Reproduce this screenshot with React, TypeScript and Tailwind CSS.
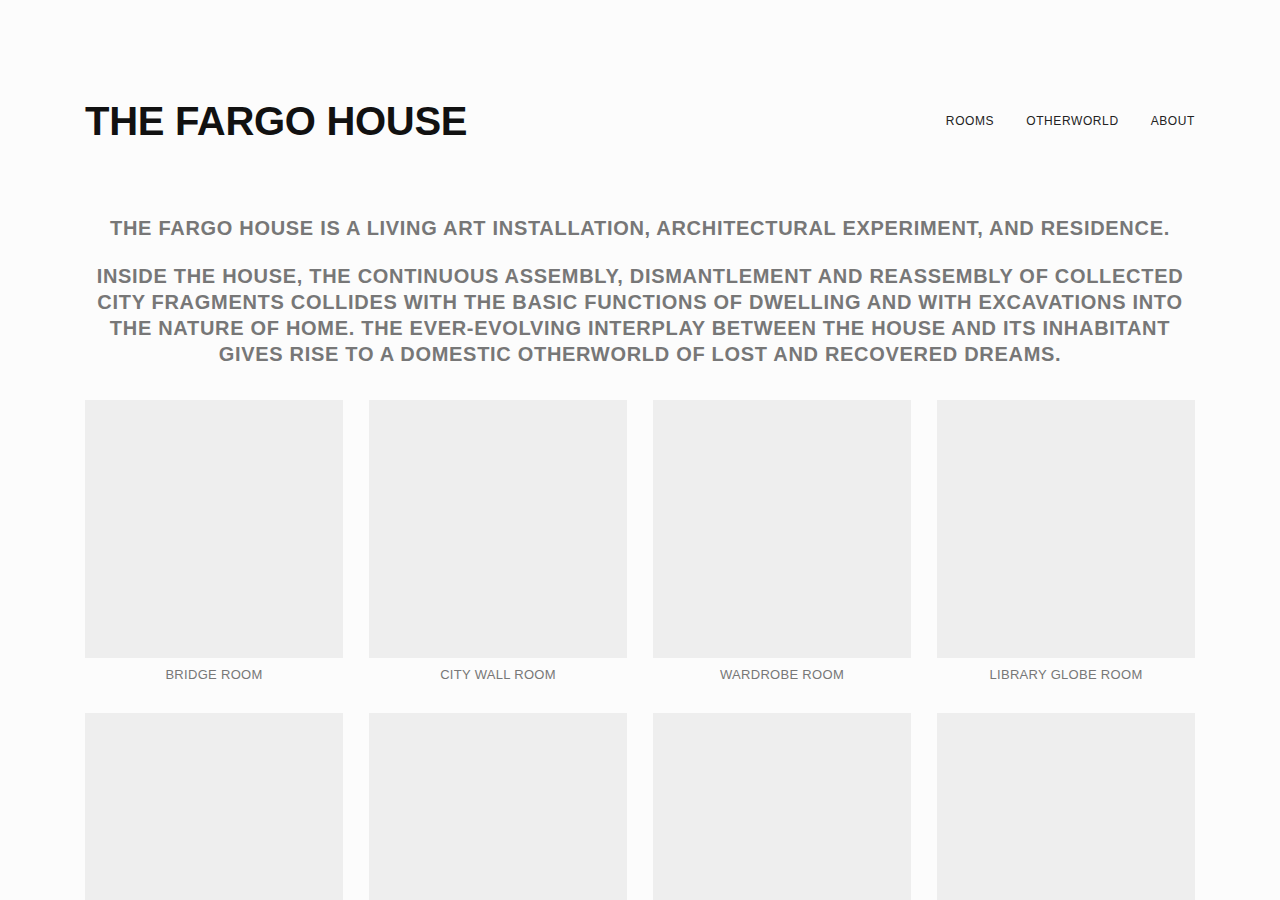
import React from 'react';

const rooms = [
  'BRIDGE ROOM',
  'CITY WALL ROOM',
  'WARDROBE ROOM',
  'LIBRARY GLOBE ROOM',
  '',
  '',
  '',
  '',
];

const intro = [
  'INSIDE THE HOUSE, THE CONTINUOUS ASSEMBLY, DISMANTLEMENT AND REASSEMBLY OF COLLECTED',
  'CITY FRAGMENTS COLLIDES WITH THE BASIC FUNCTIONS OF DWELLING AND WITH EXCAVATIONS INTO',
  'THE NATURE OF HOME. THE EVER-EVOLVING INTERPLAY BETWEEN THE HOUSE AND ITS INHABITANT',
  'GIVES RISE TO A DOMESTIC OTHERWORLD OF LOST AND RECOVERED DREAMS.',
];

const font = { fontFamily: '"Liberation Sans", Arial, sans-serif' };

export default function App() {
  return (
    <div className="min-h-screen bg-[#fcfcfc] overflow-hidden" style={font}>
      <div className="w-[1110px] mx-auto">
        <header className="flex items-center justify-between pt-[96px] h-[145px]">
          <h1 className="text-[40px] leading-[46px] font-bold tracking-[-0.3px] text-[#111]">
            THE FARGO HOUSE
          </h1>
          <nav className="flex gap-[32px] text-[12px] tracking-[0.6px] text-[#222]">
            <a href="#">ROOMS</a>
            <a href="#">OTHERWORLD</a>
            <a href="#">ABOUT</a>
          </nav>
        </header>

        <section className="mt-[70px] text-center text-[20px] leading-[26px] font-bold tracking-[0.7px] text-[#777] whitespace-nowrap">
          <p>THE FARGO HOUSE IS A LIVING ART INSTALLATION, ARCHITECTURAL EXPERIMENT, AND RESIDENCE.</p>
          <p className="mt-[22px] flex flex-col items-center">
            {intro.map((line) => (
              <span key={line}>{line}</span>
            ))}
          </p>
        </section>

        <div className="grid grid-cols-4 gap-x-[26px] mt-[33px]">
          {rooms.map((name, i) => (
            <div key={i} className="h-[313px]">
              <div className="h-[258px] bg-[#eeeeee]" />
              <div className="pt-[8px] text-center text-[13px] leading-[17px] font-light tracking-[0.3px] text-[#777]">
                {name}
              </div>
            </div>
          ))}
        </div>
      </div>
    </div>
  );
}
